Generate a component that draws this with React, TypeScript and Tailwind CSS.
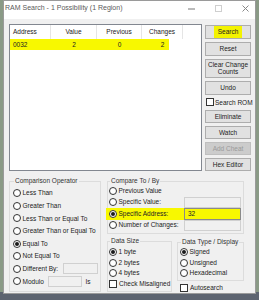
import React from 'react';

const Radio = ({ checked = false }: { checked?: boolean }) => (
  <span className="w-[8px] h-[8px] shrink-0 rounded-full border border-[#333] bg-white flex items-center justify-center">
    {checked && <span className="w-[4px] h-[4px] rounded-full bg-[#1a1a1a]" />}
  </span>
);

const Check = () => <span className="w-[8px] h-[8px] shrink-0 border border-[#333] bg-white" />;

interface BtnProps {
  h: string;
  disabled?: boolean;
  children: React.ReactNode;
}

const Btn = ({ h, disabled, children }: BtnProps) => (
  <div
    className={`${h} w-full flex flex-col items-center justify-center border leading-[7.5px] ${
      disabled ? 'bg-[#cccccc] border-[#bfbfbf] text-[#9a9a9a]' : 'bg-[#e1e1e1] border-[#adadad] text-[#222]'
    }`}
  >
    {children}
  </div>
);

interface GroupProps {
  title: string;
  className: string;
  children: React.ReactNode;
}

const Group = ({ title, className, children }: GroupProps) => (
  <fieldset className={`border border-[#dcdcdc] ${className}`}>
    <legend className="ml-[1px] px-[1px] leading-[8px] text-[#333]">{title}</legend>
    {children}
  </fieldset>
);

const App: React.FC = () => {
  const operators = [
    'Less Than',
    'Greater Than',
    'Less Than or Equal To',
    'Greater Than or Equal To',
    'Equal To',
    'Not Equal To',
  ];

  return (
    <div className="w-[259px] h-[300px] overflow-hidden pl-[3px] bg-[linear-gradient(to_bottom,#8a9a86_0%,#8a9a86_97.5%,#5d6470_97.5%)] font-['Liberation_Sans',Arial,sans-serif] text-[6.5px] text-[#222]">
      <div className="w-[253px] h-[294px] border border-[#9a9a9a] bg-[#f0f0f0] flex flex-col">
        {/* Title bar */}
        <div className="h-[18px] bg-white flex items-start pt-[3px] pl-[1px] pr-[6px]">
          <span className="text-[7px] leading-[8px] text-[#5a5a5a] whitespace-nowrap">
            RAM Search - 1 Possibility (1 Region)
          </span>
          <div className="ml-auto flex items-center gap-[20px] h-[8px]">
            <svg width="7" height="7" viewBox="0 0 7 7">
              <line x1="0" y1="4" x2="7" y2="4" stroke="#777" strokeWidth="1" />
            </svg>
            <svg width="7" height="7" viewBox="0 0 7 7">
              <rect x="0.5" y="0.5" width="6" height="6" fill="none" stroke="#cfcfcf" strokeWidth="1" />
            </svg>
            <svg width="7" height="7" viewBox="0 0 7 7">
              <path d="M0.5 0.5 L6.5 6.5 M6.5 0.5 L0.5 6.5" stroke="#888" strokeWidth="1" />
            </svg>
          </div>
        </div>

        {/* Client */}
        <div className="flex-1 px-[5px] pt-[5px]">
          <div className="flex gap-[3px] h-[147px]">
            {/* List */}
            <div className="w-[193px] h-[147px] shrink-0 border border-[#828790] bg-white">
              <div className="flex h-[14px] items-center">
                <div className="w-[41px] h-full pl-[3px] flex items-center border-r border-[#e5e5e5]">Address</div>
                <div className="w-[46px] h-full flex items-center justify-center border-r border-[#e5e5e5]">Value</div>
                <div className="w-[45px] h-full flex items-center justify-center border-r border-[#e5e5e5]">Previous</div>
                <div className="w-[41px] h-full flex items-center justify-center border-r border-[#e5e5e5]">Changes</div>
              </div>
              <div className="flex h-[11px] items-center bg-[linear-gradient(to_right,#f8f800_159px,transparent_159px)]">
                <div className="w-[41px] pl-[3px]">0032</div>
                <div className="w-[46px] text-center">2</div>
                <div className="w-[45px] text-center">0</div>
                <div className="w-[41px] text-center">2</div>
              </div>
            </div>

            {/* Buttons */}
            <div className="w-[46px] flex flex-col gap-[3px] pt-[1px]">
              <Btn h="h-[14px]">
                <span className="bg-[#f3f300] px-[4px] py-[2px]">Search</span>
              </Btn>
              <Btn h="h-[14px]">Reset</Btn>
              <Btn h="h-[19px]">
                <span>Clear Change</span>
                <span>Counts</span>
              </Btn>
              <Btn h="h-[14px]">Undo</Btn>
              <div className="h-[10px] flex items-center gap-[1px] pl-[1px] whitespace-nowrap">
                <Check />
                <span>Search ROM</span>
              </div>
              <Btn h="h-[13px]">Eliminate</Btn>
              <Btn h="h-[13px]">Watch</Btn>
              <Btn h="h-[13px]" disabled>
                Add Cheat
              </Btn>
              <Btn h="h-[13px]">Hex Editor</Btn>
            </div>
          </div>

          {/* Lower groups */}
          <div className="flex gap-[6px] mt-[6px]">
            <Group title="Comparison Operator" className="w-[92px] h-[115px] pl-[3px] pr-[2px] pt-[2px]">
              {operators.map((op, i) => (
                <div key={op} className="h-[12.6px] flex items-center gap-[1.5px] whitespace-nowrap">
                  <Radio checked={i === 4} />
                  <span>{op}</span>
                </div>
              ))}
              <div className="h-[12.6px] flex items-center gap-[1.5px] whitespace-nowrap">
                <Radio />
                <span>Different By:</span>
                <span className="ml-auto w-[35px] h-[11px] border border-[#d0d0d0]" />
              </div>
              <div className="h-[12.6px] flex items-center gap-[1.5px] whitespace-nowrap">
                <Radio />
                <span className="w-[24px]">Modulo</span>
                <span className="w-[34px] h-[11px] border border-[#d0d0d0]" />
                <span className="ml-[2px]">Is</span>
              </div>
            </Group>

            <div className="w-[137px] flex flex-col">
              <Group title="Compare To / By" className="h-[57px] pl-[1px] pr-[2px]">
                <div className="h-[11.5px] flex items-center gap-[1.5px] whitespace-nowrap">
                  <Radio />
                  <span>Previous Value</span>
                </div>
                <div className="h-[11.5px] flex items-center gap-[1.5px] whitespace-nowrap">
                  <Radio />
                  <span>Specific Value:</span>
                  <span className="ml-auto w-[57px] h-full border border-[#d0d0d0]" />
                </div>
                <div className="h-[11.5px] -ml-[3px] pl-[3px] flex items-center gap-[1.5px] whitespace-nowrap bg-[#f8f800]">
                  <Radio checked />
                  <span>Specific Address:</span>
                  <span className="ml-auto w-[57px] h-full border border-[#8a8a8a] pl-[3px] flex items-center">32</span>
                </div>
                <div className="h-[11.5px] flex items-center gap-[1.5px] whitespace-nowrap">
                  <Radio />
                  <span>Number of Changes:</span>
                  <span className="ml-auto w-[57px] h-full border border-[#d0d0d0]" />
                </div>
              </Group>

              <div className="flex gap-[5px] mt-[3px] items-start">
                <Group title="Data Size" className="w-[65px] h-[55px] pl-[1px] pt-[1.5px]">
                  {['1 byte', '2 bytes', '4 bytes'].map((s, i) => (
                    <div key={s} className="h-[10.7px] flex items-center gap-[1.5px] whitespace-nowrap">
                      <Radio checked={i === 0} />
                      <span>{s}</span>
                    </div>
                  ))}
                  <div className="h-[10.7px] flex items-center gap-[2px] whitespace-nowrap">
                    <Check />
                    <span>Check Misaligned</span>
                  </div>
                </Group>

                <div className="w-[67px] flex flex-col mt-[1px]">
                  <Group title="Data Type / Display" className="h-[43px] pl-[2px] pt-[1px]">
                    {['Signed', 'Unsigned', 'Hexadecimal'].map((s, i) => (
                      <div key={s} className="h-[10.5px] flex items-center gap-[1.5px] whitespace-nowrap">
                        <Radio checked={i === 0} />
                        <span>{s}</span>
                      </div>
                    ))}
                  </Group>
                  <div className="h-[10px] mt-[2px] pl-[3px] flex items-center gap-[2px] whitespace-nowrap">
                    <Check />
                    <span>Autosearch</span>
                  </div>
                </div>
              </div>
            </div>
          </div>
        </div>
      </div>
    </div>
  );
};

export default App;
